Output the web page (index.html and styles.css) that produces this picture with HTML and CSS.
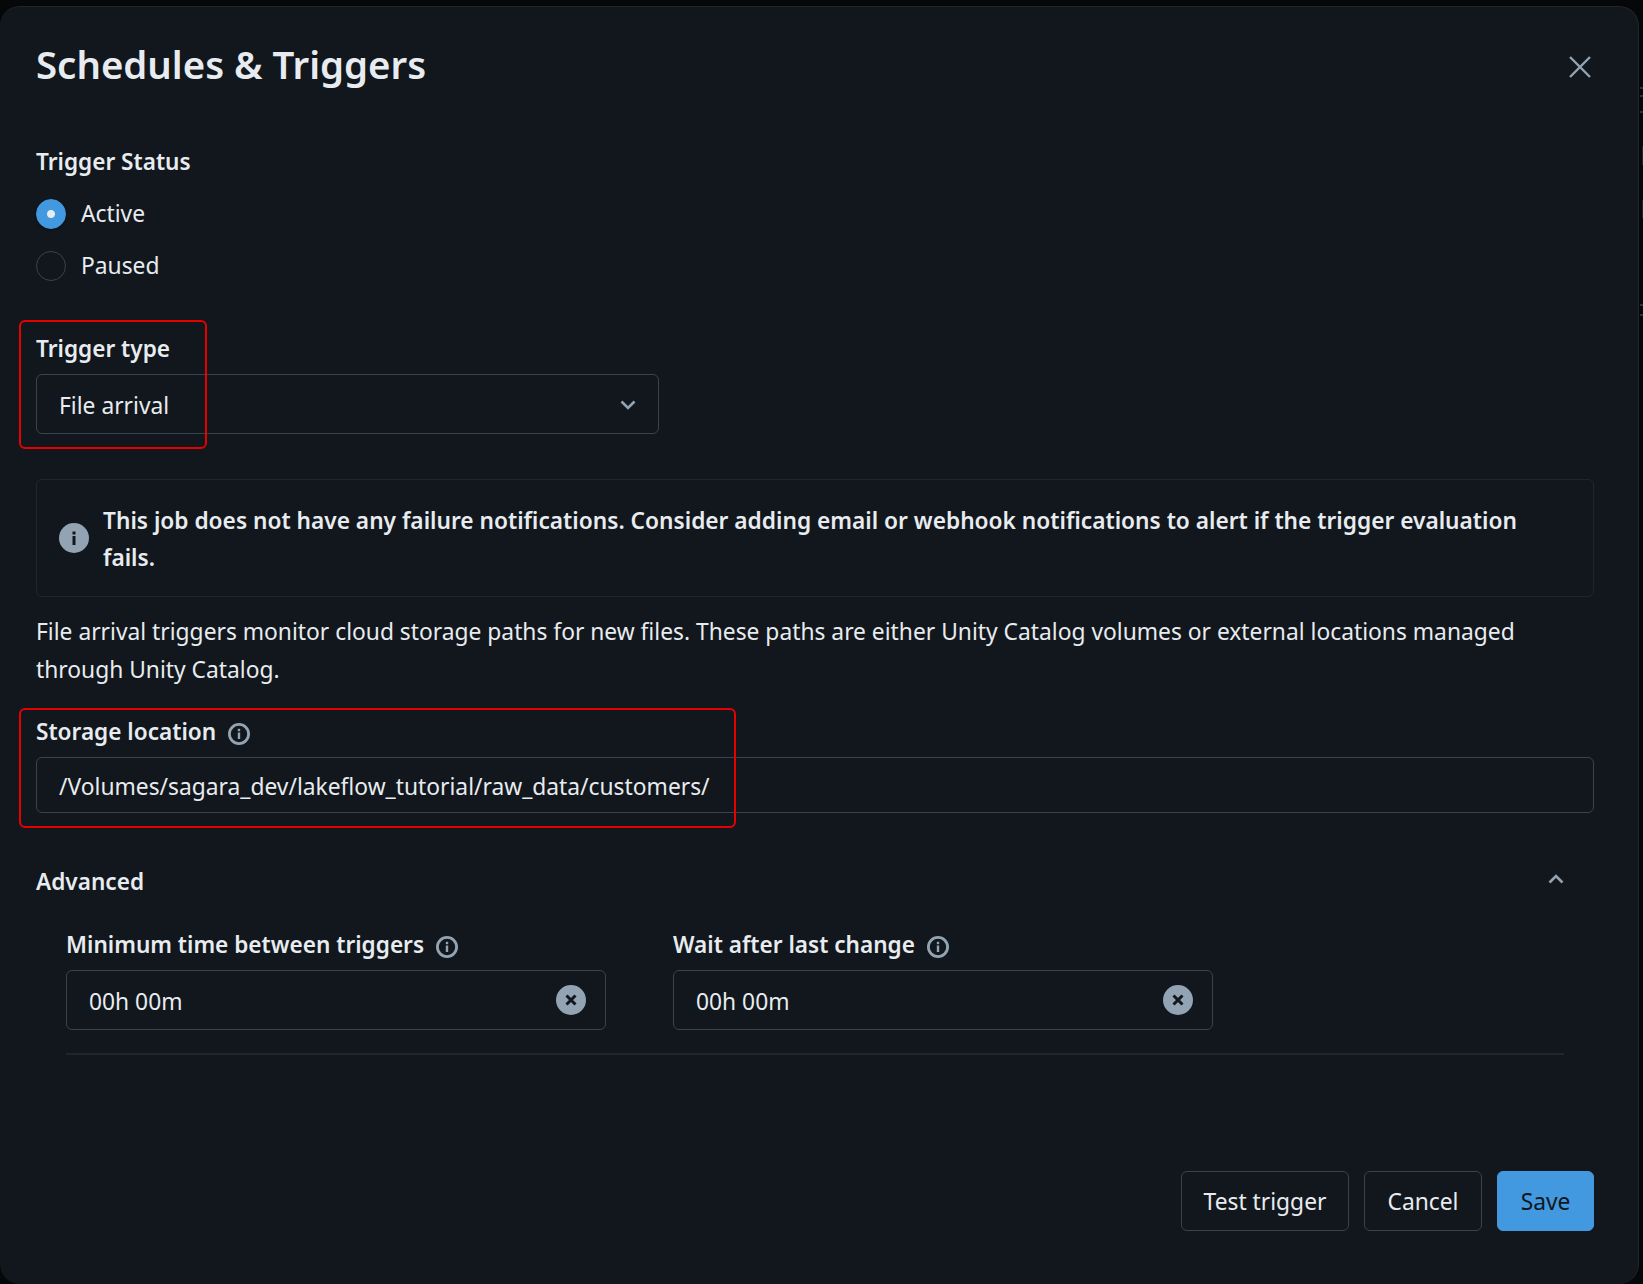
FILE: index.html

```html
<!DOCTYPE html>
<html>
<head>
  <meta charset="utf-8" />
  <meta name="viewport" content="width=device-width, initial-scale=1" />
  <title>Schedules &amp; Triggers</title>
  <link rel="stylesheet" href="styles.css">
</head>
<body>
  <div class="page-edge"></div>
  <div class="modal">
    <div class="modal-header">
      <h1>Schedules &amp; Triggers</h1>
      <svg class="close-icon" width="24" height="24" viewBox="0 0 24 24"><path d="M2 2 L22 22 M22 2 L2 22" /></svg>
    </div>

    <div class="field-label">Trigger Status</div>
    <div class="radio-group">
      <div class="radio-row"><span class="radio checked"></span>Active</div>
      <div class="radio-row"><span class="radio"></span>Paused</div>
    </div>

    <div class="trigger-type">
      <div class="field-label">Trigger type</div>
      <div class="select">
        <span>File arrival</span>
        <svg class="chevron" width="16" height="10" viewBox="0 0 16 10"><path d="M1.5 1.5 L8 8 L14.5 1.5" /></svg>
      </div>
      <div class="highlight highlight-type"></div>
    </div>

    <div class="alert">
      <svg class="alert-icon" width="30" height="30" viewBox="0 0 30 30">
        <circle cx="15" cy="15" r="15" fill="#92a4b3" />
        <rect x="13.5" y="13" width="3" height="9" fill="#11171c" />
        <rect x="13.5" y="8.5" width="3" height="3" fill="#11171c" />
      </svg>
      <p>This job does not have any failure notifications. Consider adding email or webhook notifications to alert if the trigger evaluation fails.</p>
    </div>

    <p class="help-text">File arrival triggers monitor cloud storage paths for new files. These paths are either Unity Catalog volumes or external locations managed through Unity Catalog.</p>

    <div class="storage">
      <div class="field-label">
        Storage location
        <svg class="info-icon" width="22" height="22" viewBox="0 0 22 22">
          <circle cx="11" cy="11" r="9.6" />
          <rect x="9.8" y="9.5" width="2.4" height="6.5" />
          <rect x="9.8" y="5.8" width="2.4" height="2.4" />
        </svg>
      </div>
      <div class="input">/Volumes/sagara_dev/lakeflow_tutorial/raw_data/customers/</div>
      <div class="highlight highlight-storage"></div>
    </div>

    <div class="advanced-header">
      <span class="field-label">Advanced</span>
      <svg class="chevron" width="16" height="10" viewBox="0 0 16 10"><path d="M1.5 8.5 L8 2 L14.5 8.5" /></svg>
    </div>
    <div class="advanced-body">
      <div class="time-field">
        <div class="field-label">
          Minimum time between triggers
          <svg class="info-icon" width="22" height="22" viewBox="0 0 22 22">
            <circle cx="11" cy="11" r="9.6" />
            <rect x="9.8" y="9.5" width="2.4" height="6.5" />
            <rect x="9.8" y="5.8" width="2.4" height="2.4" />
          </svg>
        </div>
        <div class="select">
          <span>00h 00m</span>
          <svg width="30" height="30" viewBox="0 0 30 30">
            <circle cx="15" cy="15" r="15" fill="#92a4b3" />
            <path d="M10.5 10.5 L19.5 19.5 M19.5 10.5 L10.5 19.5" stroke="#11171c" stroke-width="3" />
          </svg>
        </div>
      </div>
      <div class="time-field">
        <div class="field-label">
          Wait after last change
          <svg class="info-icon" width="22" height="22" viewBox="0 0 22 22">
            <circle cx="11" cy="11" r="9.6" />
            <rect x="9.8" y="9.5" width="2.4" height="6.5" />
            <rect x="9.8" y="5.8" width="2.4" height="2.4" />
          </svg>
        </div>
        <div class="select">
          <span>00h 00m</span>
          <svg width="30" height="30" viewBox="0 0 30 30">
            <circle cx="15" cy="15" r="15" fill="#92a4b3" />
            <path d="M10.5 10.5 L19.5 19.5 M19.5 10.5 L10.5 19.5" stroke="#11171c" stroke-width="3" />
          </svg>
        </div>
      </div>
    </div>
    <div class="divider"></div>

    <div class="modal-footer">
      <button class="btn btn-test">Test trigger</button>
      <button class="btn btn-cancel">Cancel</button>
      <button class="btn btn-save">Save</button>
    </div>
  </div>
</body>
</html>
```

FILE: styles.css

```css
html,
body {
  height: 100%;
}
body {
  margin: 0;
  background-color: #050709;
  font-family: "Noto Sans", "Open Sans", Arial, sans-serif;
  font-size: 22.8px;
  color: #e8ecf0;
  overflow: hidden;
}
/* bits of the page behind the modal, showing at the right edge */
.page-edge {
  position: absolute;
  top: 0;
  right: 0;
  width: 3px;
  height: 330px;
  background:
    linear-gradient(#2b3238, #2b3238) 0 87px / 3px 2px no-repeat,
    linear-gradient(#2b3238, #2b3238) 0 95px / 3px 2px no-repeat,
    linear-gradient(#2b3238, #2b3238) 0 111px / 3px 2px no-repeat,
    linear-gradient(#1f272d, #1f272d) 2px 146px / 1px 19px no-repeat,
    linear-gradient(#1f272d, #1f272d) 2px 200px / 1px 18px no-repeat,
    linear-gradient(#2b3238, #2b3238) 0 304px / 3px 2px no-repeat,
    linear-gradient(#2b3238, #2b3238) 0 314px / 3px 2px no-repeat;
}
.modal {
  display: flex;
  flex-direction: column;
  box-sizing: border-box;
  height: calc(100% - 6px);
  margin: 6px 4px 0 0;
  padding: 0 44px 53px 36px;
  background: #11171c;
  border-top: 1px solid #1f272d;
  border-right: 1px solid #1f272d;
  border-radius: 20px;
}
.modal-header {
  display: flex;
  justify-content: space-between;
  align-items: center;
  margin-bottom: 55px;
  padding-top: 30px;
}
.modal-header h1 {
  margin: 0;
  font-size: 38.4px;
  font-weight: 600;
  line-height: 54px;
}
.close-icon {
  margin-right: 2px;
  margin-top: 5px;
}
.close-icon path {
  stroke: #92a4b3;
  stroke-width: 2.4;
  fill: none;
}
.field-label {
  display: flex;
  align-items: center;
  gap: 12px;
  box-sizing: border-box;
  height: 30px;
  padding-top: 2px;
  font-size: 22.6px;
  font-weight: 600;
  line-height: 30px;
}
.radio-group {
  display: flex;
  flex-direction: column;
  gap: 22px;
  margin-top: 23px;
}
.radio-row {
  display: flex;
  align-items: center;
  gap: 15px;
  line-height: 30px;
}
.radio {
  box-sizing: border-box;
  width: 30px;
  height: 30px;
  border: 1px solid #37444f;
  border-radius: 50%;
}
.radio.checked {
  background: radial-gradient(circle, #e8ecf0 0, #e8ecf0 3.5px, #4299e0 4.5px);
  border-color: #4299e0;
  box-shadow: 0 1px 2px rgba(0, 0, 0, 0.5);
}
.trigger-type,
.storage {
  position: relative;
}
.trigger-type {
  margin-top: 53px;
}
.trigger-type .field-label {
  padding-top: 0;
}
.select {
  display: flex;
  justify-content: space-between;
  align-items: center;
  box-sizing: border-box;
  height: 60px;
  margin-top: 11px;
  padding: 0 19px 0 22px;
  border: 1px solid #37444f;
  border-radius: 6px;
}
.select span {
  padding-top: 2px;
}
.trigger-type .select {
  width: 623px;
  margin-top: 10px;
}
.trigger-type .chevron {
  margin-right: 3px;
  margin-top: 2px;
}
.chevron path {
  stroke: #92a4b3;
  stroke-width: 2.6;
  fill: none;
}
.highlight {
  position: absolute;
  box-sizing: border-box;
  border: 2px solid #e60000;
  border-radius: 6px;
  left: -17px;
}
.highlight-type {
  top: -14px;
  width: 188px;
  height: 129px;
}
.highlight-storage {
  top: -8px;
  width: 717px;
  height: 120px;
}
.alert {
  display: flex;
  align-items: center;
  gap: 14px;
  box-sizing: border-box;
  height: 118px;
  margin-top: 45px;
  padding: 1px 22px 0;
  border: 1px solid #1f272d;
  border-radius: 6px;
}
.alert-icon {
  flex-shrink: 0;
  margin-top: -1px;
}
.alert p {
  margin: 0;
  font-size: 22.7px;
  font-weight: 600;
  line-height: 37px;
}
.help-text {
  margin: 16px 0 0;
  line-height: 38px;
}
.storage {
  margin-top: 27px;
}
.info-icon circle {
  fill: none;
  stroke: #92a4b3;
  stroke-width: 2.8;
}
.info-icon rect {
  fill: #92a4b3;
}
.info-icon {
  margin-top: 4px;
}
.input {
  display: flex;
  align-items: center;
  box-sizing: border-box;
  height: 56px;
  margin-top: 11px;
  padding: 2px 22px 0;
  border: 1px solid #37444f;
  border-radius: 6px;
}
.advanced-header {
  display: flex;
  justify-content: space-between;
  align-items: center;
  height: 30px;
  margin-top: 53px;
  padding-right: 30px;
}
.advanced-header .chevron {
  margin-top: -5px;
}
.advanced-body {
  display: grid;
  grid-template-columns: 540px 540px;
  column-gap: 67px;
  margin-top: 33px;
  padding-left: 30px;
}
.divider {
  height: 2px;
  margin: 23px 30px 0;
  background: #1f272d;
}
.modal-footer {
  display: flex;
  justify-content: flex-end;
  gap: 15px;
  margin-top: auto;
}
.btn {
  height: 60px;
  padding: 0;
  font-family: inherit;
  font-size: 22.8px;
  color: #e8ecf0;
  white-space: nowrap;
  background: transparent;
  border: 1px solid #37444f;
  border-radius: 6px;
}
.btn-test {
  width: 168px;
}
.btn-cancel {
  width: 118px;
}
.btn-save {
  width: 97px;
  color: #11171c;
  background: #4299e0;
  border-color: #4299e0;
}
```
